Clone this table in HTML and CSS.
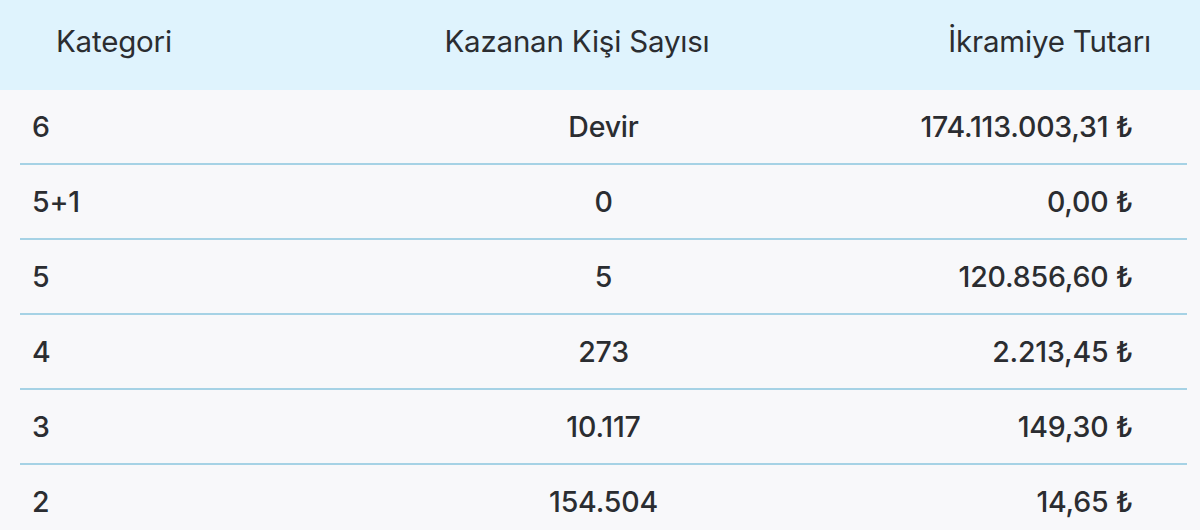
FILE: index.html
```html
<!DOCTYPE html>
<html lang="tr">
<head>
<meta charset="utf-8">
<link rel="stylesheet" href="styles.css">
</head>
<body>
<div class="table">
  <div class="head">
    <div class="c1">Kategori</div>
    <div class="c2">Kazanan Kişi Sayısı</div>
    <div class="c3">İkramiye Tutarı</div>
  </div>
  <div class="rows">
    <div class="row first"><div class="c1">6</div><div class="c2">Devir</div><div class="c3">174.113.003,31 ₺</div></div>
    <div class="row"><div class="c1">5+1</div><div class="c2">0</div><div class="c3">0,00 ₺</div></div>
    <div class="row"><div class="c1">5</div><div class="c2">5</div><div class="c3">120.856,60 ₺</div></div>
    <div class="row"><div class="c1">4</div><div class="c2">273</div><div class="c3">2.213,45 ₺</div></div>
    <div class="row"><div class="c1">3</div><div class="c2">10.117</div><div class="c3">149,30 ₺</div></div>
    <div class="row"><div class="c1">2</div><div class="c2">154.504</div><div class="c3">14,65 ₺</div></div>
  </div>
</div>
</body>
</html>
```

FILE: styles.css
```css
html, body {
  margin: 0;
  padding: 0;
  background: #f8f8fa;
  overflow: hidden;
}
body {
  font-family: "Inter", "DejaVu Sans", sans-serif;
  color: #2b2d31;
}
.head {
  display: grid;
  grid-template-columns: 1fr 1fr 1fr;
  align-items: center;
  height: 90px;
  box-sizing: border-box;
  padding-bottom: 8px;
  background: #dff3fd;
  font-size: 29.5px;
  font-weight: 400;
  letter-spacing: -0.2px;
}
.head .c1 { padding-left: 56px; }
.head .c2 { text-align: center; padding-right: 46px; }
.head .c3 { text-align: right; padding-right: 49px; }
.rows {
  margin: 0 13px 0 20px;
}
.row {
  display: grid;
  grid-template-columns: 1fr 1fr 1fr;
  align-items: center;
  height: 73px;
  border-top: 2px solid #a6d2e5;
  font-size: 28.5px;
  font-weight: 500;
  letter-spacing: -0.2px;
}
.row.first {
  height: 73px;
  border-top: none;
}
.row .c1 { padding-left: 12px; }
.row .c2 { text-align: center; }
.row .c3 { text-align: right; padding-right: 54px; }
```
